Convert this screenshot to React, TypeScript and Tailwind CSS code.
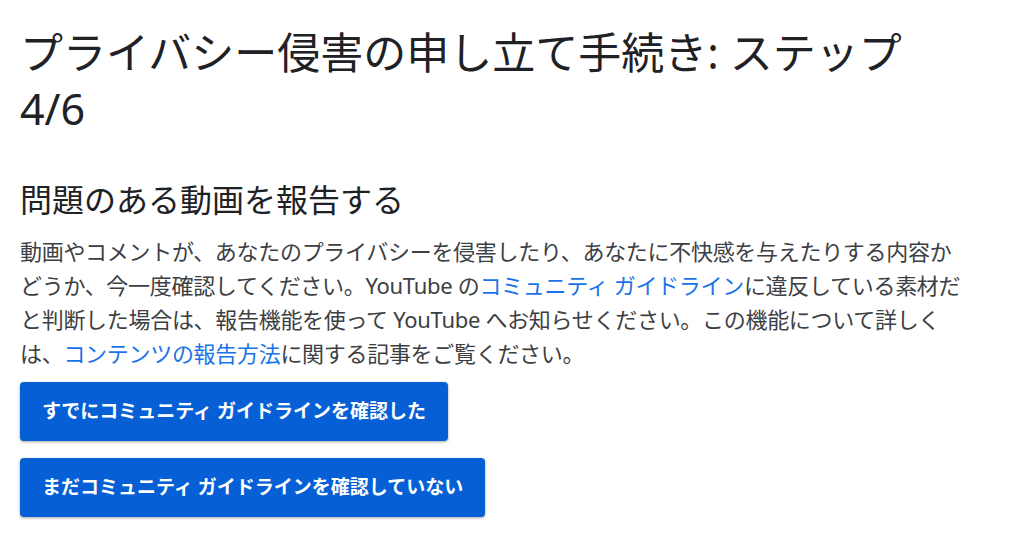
import React from 'react';

const font = "font-['Noto_Sans','Noto_Sans_CJK_JP',sans-serif]";

const Link: React.FC<{ children: React.ReactNode }> = ({ children }) => (
  <a href="#" className="text-[#1a73e8] no-underline">
    {children}
  </a>
);

const App: React.FC = () => {
  const actions = [
    'すでにコミュニティ ガイドラインを確認した',
    'まだコミュニティ ガイドラインを確認していない',
  ];

  return (
    <div className={`min-h-screen bg-white px-5 pt-[25px] ${font}`}>
      <div className="w-[950px]">
        {/* Page title */}
        <h1 className="max-w-[900px] text-[43px] leading-[56px] font-normal text-[#202124]">
          プライバシー侵害の申し立て手続き: ステップ 4/6
        </h1>

        {/* Section */}
        <h2 className="mt-[43px] text-[32px] leading-[40px] font-normal text-[#202124]">
          問題のある動画を報告する
        </h2>
        <p className="mt-[14px] text-[22px] leading-[34px] tracking-[-0.3px] text-[#3c4043]">
          動画やコメントが、あなたのプライバシーを侵害したり、あなたに不快感を与えたりする内容かどうか、今一度確認してください。YouTube の
          <Link>コミュニティ ガイドライン</Link>
          に違反している素材だと判断した場合は、報告機能を使って YouTube へお知らせください。この機能について詳しくは、
          <Link>コンテンツの報告方法</Link>
          に関する記事をご覧ください。
        </p>

        {/* Actions */}
        <div className="mt-3 flex flex-col items-start gap-[17px]">
          {actions.map((label) => (
            <button
              key={label}
              className="h-[59px] rounded-[4px] bg-[#065fd4] px-[22px] text-[19px] font-bold text-white shadow-[0_1px_3px_rgba(0,0,0,0.35)]"
            >
              {label}
            </button>
          ))}
        </div>
      </div>
    </div>
  );
};

export default App;
